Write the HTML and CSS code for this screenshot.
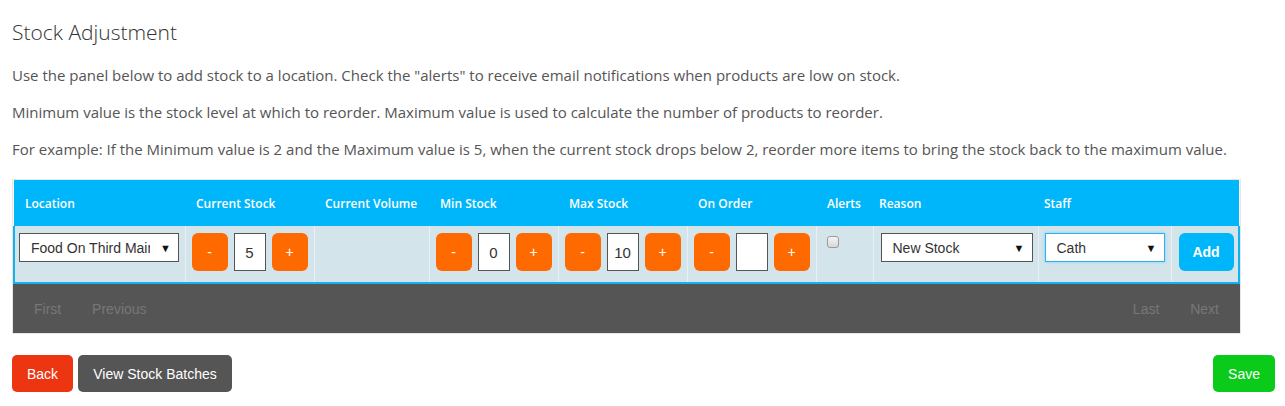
FILE: index.html
```html
<!DOCTYPE html>
<html lang="en">

<head>
  <meta charset="UTF-8">
  <meta name="viewport" content="width=device-width, initial-scale=1.0">
  <title>Stock Adjustment</title>
  <link rel="stylesheet" href="styles.css">
</head>

<body>
  <div class="page">
    <h1>Stock Adjustment</h1>
    <p>Use the panel below to add stock to a location. Check the "alerts" to receive email notifications when products are low on stock.</p>
    <p>Minimum value is the stock level at which to reorder. Maximum value is used to calculate the number of products to reorder.</p>
    <p>For example: If the Minimum value is 2 and the Maximum value is 5, when the current stock drops below 2, reorder more items to bring the stock back to the maximum value.</p>

    <div class="grid-wrap">
      <table class="stock-grid">
        <colgroup>
          <col style="width:171px">
          <col style="width:129px">
          <col style="width:115px">
          <col style="width:129px">
          <col style="width:129px">
          <col style="width:129px">
          <col style="width:57px">
          <col style="width:165px">
          <col style="width:133px">
          <col>
        </colgroup>
        <thead>
          <tr>
            <th>Location</th>
            <th>Current Stock</th>
            <th>Current Volume</th>
            <th>Min Stock</th>
            <th>Max Stock</th>
            <th>On Order</th>
            <th>Alerts</th>
            <th class="narrow">Reason</th>
            <th class="narrow">Staff</th>
            <th></th>
          </tr>
        </thead>
        <tbody>
          <tr class="edit-row">
            <td class="first">
              <div class="select-box loc">
                <select>
                  <option>Food On Third Main</option>
                </select>
                <span class="arrow">&#9660;</span>
              </div>
            </td>
            <td>
              <div class="stepper">
                <button class="step">-</button>
                <input class="qty" type="text" value="5">
                <button class="step">+</button>
              </div>
            </td>
            <td></td>
            <td>
              <div class="stepper">
                <button class="step">-</button>
                <input class="qty" type="text" value="0">
                <button class="step">+</button>
              </div>
            </td>
            <td>
              <div class="stepper">
                <button class="step">-</button>
                <input class="qty" type="text" value="10">
                <button class="step">+</button>
              </div>
            </td>
            <td>
              <div class="stepper">
                <button class="step">-</button>
                <input class="qty" type="text" value="">
                <button class="step">+</button>
              </div>
            </td>
            <td><input type="checkbox" class="alert-check"></td>
            <td>
              <div class="select-box reason">
                <select>
                  <option>New Stock</option>
                </select>
                <span class="arrow">&#9660;</span>
              </div>
            </td>
            <td>
              <div class="select-box staff focused">
                <select>
                  <option>Cath</option>
                </select>
                <span class="arrow">&#9660;</span>
              </div>
            </td>
            <td><button class="add-btn">Add</button></td>
          </tr>
        </tbody>
      </table>
      <div class="pager">
        <div class="pager-left">
          <span>First</span>
          <span>Previous</span>
        </div>
        <div class="pager-right">
          <span>Last</span>
          <span>Next</span>
        </div>
      </div>
    </div>

    <div class="actions">
      <div>
        <button class="btn btn-back">Back</button>
        <button class="btn btn-batches">View Stock Batches</button>
      </div>
      <button class="btn btn-save">Save</button>
    </div>
  </div>
</body>

</html>
```

FILE: styles.css
```css
* {
  margin: 0;
  padding: 0;
  box-sizing: border-box;
}

body {
  font-family: 'Open Sans', sans-serif;
  color: #555;
  background: #fff;
}

.page {
  padding: 18px 10px 0 12px;
}

h1 {
  font-size: 21px;
  font-weight: 300;
  color: #333;
  line-height: 28px;
  margin-bottom: 19px;
}

p {
  font-size: 15px;
  line-height: 20px;
  margin-bottom: 17px;
}

.grid-wrap {
  width: 1229px;
  border: 1px solid #e6e6e6;
  margin-top: 20px;
}

.stock-grid {
  width: 100%;
  border-collapse: collapse;
  table-layout: fixed;
}

.stock-grid th {
  background-color: #00b6fa;
  color: #fff;
  font-size: 12px;
  font-weight: 600;
  text-align: left;
  height: 46px;
  padding: 0 12px 0 11px;
  white-space: nowrap;
}

.stock-grid th.narrow {
  padding-left: 6px;
}

.edit-row {
  border: 2px solid #12b2f2;
  border-top: none;
}

.edit-row td {
  background-color: #d4e4eb;
  border-left: 1px solid #e9eff2;
  vertical-align: top;
  padding: 7px 6px 0 6px;
  height: 57px;
}

.edit-row td.first {
  border-left: none;
  padding-left: 4px;
}

.select-box {
  position: relative;
  height: 29px;
}

.select-box select {
  appearance: none;
  -webkit-appearance: none;
  width: 100%;
  height: 29px;
  border: 1px solid #555;
  border-radius: 0;
  background: #fff;
  font-family: 'Liberation Sans', Arial, sans-serif;
  font-size: 14px;
  color: #333;
  padding: 0 28px 0 11px;
  outline: none;
}

.select-box .arrow {
  position: absolute;
  right: 8px;
  top: 7px;
  font-size: 11px;
  color: #111;
  pointer-events: none;
}

.select-box.loc {
  width: 160px;
}

.select-box.reason {
  width: 152px;
  margin-left: 1px;
}

.select-box.staff {
  width: 120px;
}

.select-box.focused select {
  border-color: #2ab1f2;
  box-shadow: 0 0 3px #7fd2f7;
}

.stepper {
  display: flex;
  gap: 6px;
}

.step {
  width: 36px;
  height: 38px;
  border: none;
  border-radius: 6px;
  background-color: #ff6a00;
  color: #fff;
  font-family: 'Liberation Sans', Arial, sans-serif;
  font-size: 14px;
  cursor: pointer;
}

.qty {
  width: 32px;
  height: 38px;
  border: 1px solid #555;
  text-align: center;
  font-family: 'Liberation Sans', Arial, sans-serif;
  font-size: 15px;
  color: #333;
  outline: none;
}

.alert-check {
  appearance: none;
  -webkit-appearance: none;
  display: block;
  width: 12px;
  height: 12px;
  margin: 3px 0 0 4px;
  border: 1px solid #9a9a9a;
  border-radius: 3px;
  background: linear-gradient(#f4f4f4, #d8d8d8);
}

.add-btn {
  width: 55px;
  height: 38px;
  border: none;
  border-radius: 6px;
  background-color: #00b6fa;
  color: #fff;
  font-family: 'Liberation Sans', Arial, sans-serif;
  font-size: 14px;
  font-weight: bold;
  margin-left: 1px;
  cursor: pointer;
}

.pager {
  display: flex;
  justify-content: space-between;
  align-items: center;
  height: 49px;
  background-color: #555;
  font-family: 'Liberation Sans', Arial, sans-serif;
  font-size: 14px;
  color: #777;
  padding: 0 21px 0 21px;
}

.pager span {
  margin-right: 27px;
}

.pager-right span {
  margin-right: 0;
  margin-left: 27px;
}

.actions {
  display: flex;
  justify-content: space-between;
  margin-top: 21px;
}

.btn {
  height: 37px;
  border: none;
  border-radius: 5px;
  color: #fff;
  font-family: 'Liberation Sans', Arial, sans-serif;
  font-size: 14px;
  padding: 0 15px;
  cursor: pointer;
}

.btn-back {
  background-color: #ee3511;
}

.btn-batches {
  background-color: #555;
  margin-left: 1px;
}

.btn-save {
  background-color: #0acb1a;
}
```
